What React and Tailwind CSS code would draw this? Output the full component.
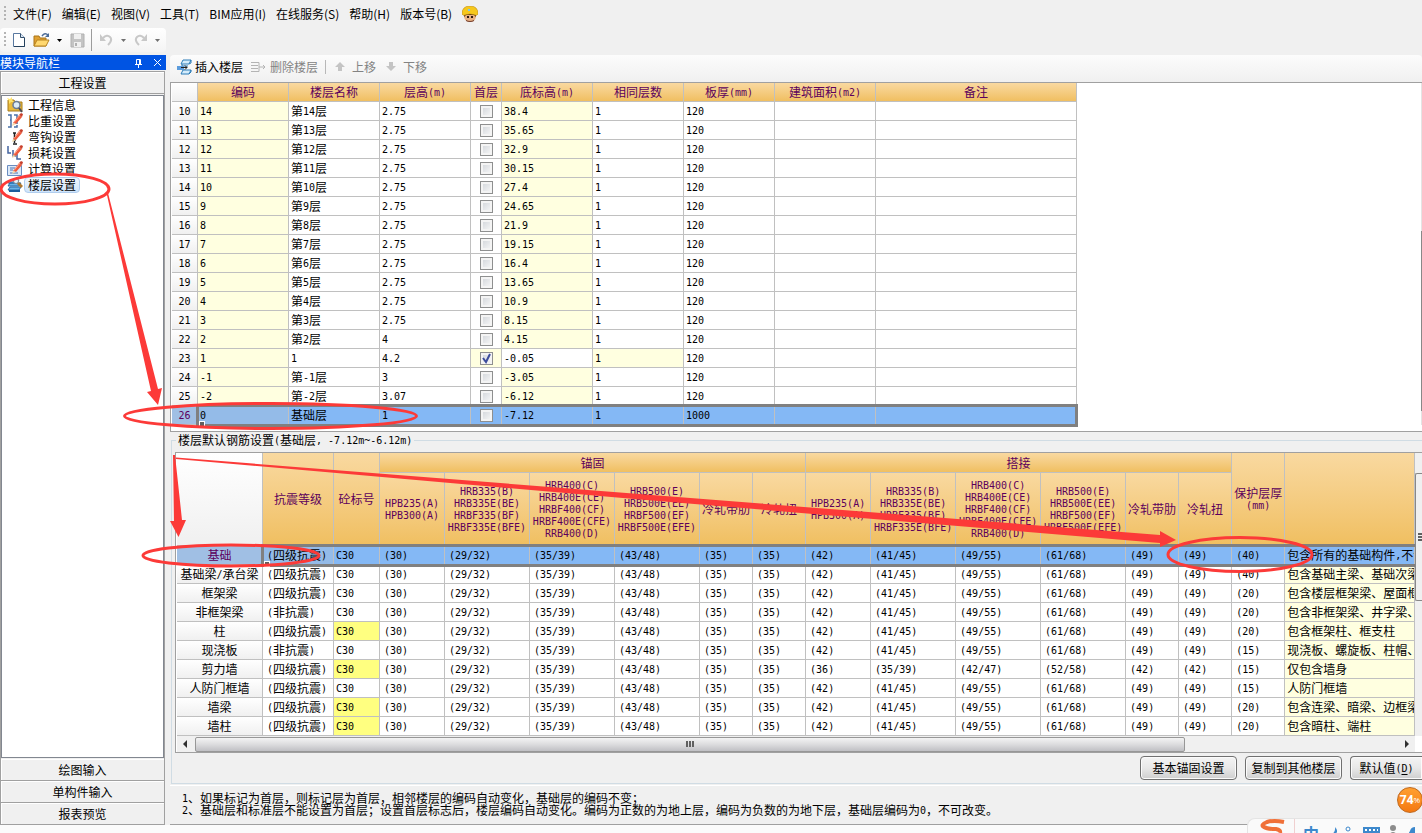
import { Fragment } from "react";
import clsx from "clsx";

const menus = [
  "文件(F)",
  "编辑(E)",
  "视图(V)",
  "工具(T)",
  "BIM应用(I)",
  "在线服务(S)",
  "帮助(H)",
  "版本号(B)",
];

const floorCols = [
  { label: "编码", width: "w-[91px]" },
  { label: "楼层名称", width: "w-[91px]" },
  { label: "层高(m)", width: "w-[91px]" },
  { label: "首层", width: "w-[31px]" },
  { label: "底标高(m)", width: "w-[91px]" },
  { label: "相同层数", width: "w-[91px]" },
  { label: "板厚(mm)", width: "w-[91px]" },
  { label: "建筑面积(m2)", width: "w-[101px]" },
  { label: "备注", width: "w-[201px]" },
];

// row no, code, name, height, bottom elevation, slab thickness
const floors = [
  [10, "14", "第14层", "2.75", "38.4", "120"],
  [11, "13", "第13层", "2.75", "35.65", "120"],
  [12, "12", "第12层", "2.75", "32.9", "120"],
  [13, "11", "第11层", "2.75", "30.15", "120"],
  [14, "10", "第10层", "2.75", "27.4", "120"],
  [15, "9", "第9层", "2.75", "24.65", "120"],
  [16, "8", "第8层", "2.75", "21.9", "120"],
  [17, "7", "第7层", "2.75", "19.15", "120"],
  [18, "6", "第6层", "2.75", "16.4", "120"],
  [19, "5", "第5层", "2.75", "13.65", "120"],
  [20, "4", "第4层", "2.75", "10.9", "120"],
  [21, "3", "第3层", "2.75", "8.15", "120"],
  [22, "2", "第2层", "4", "4.15", "120"],
  [23, "1", "1", "4.2", "-0.05", "120"],
  [24, "-1", "第-1层", "3", "-3.05", "120"],
  [25, "-2", "第-2层", "3.07", "-6.12", "120"],
  [26, "0", "基础层", "1", "-7.12", "1000"],
];

const steelCols = [
  { lines: ["HPB235(A)", "HPB300(A)"] },
  { lines: ["HRB335(B)", "HRB335E(BE)", "HRBF335(BF)", "HRBF335E(BFE)"] },
  { lines: ["HRB400(C)", "HRB400E(CE)", "HRBF400(CF)", "HRBF400E(CFE)", "RRB400(D)"] },
  { lines: ["HRB500(E)", "HRB500E(EE)", "HRBF500(EF)", "HRBF500E(EFE)"] },
  { lines: ["冷轧带肋"] },
  { lines: ["冷轧扭"] },
];

const anchor = ["(30)", "(29/32)", "(35/39)", "(43/48)", "(35)", "(35)"];
const lap = ["(42)", "(41/45)", "(49/55)", "(61/68)", "(49)", "(49)"];
const wallLap = ["(36)", "(35/39)", "(42/47)", "(52/58)", "(42)", "(42)"];

const members = [
  { name: "基础", grade: "(四级抗震)", lap, cover: "(40)", note: "包含所有的基础构件,不含", selected: true },
  { name: "基础梁/承台梁", grade: "(四级抗震)", lap, cover: "(40)", note: "包含基础主梁、基础次梁" },
  { name: "框架梁", grade: "(四级抗震)", lap, cover: "(20)", note: "包含楼层框架梁、屋面框" },
  { name: "非框架梁", grade: "(非抗震)", lap, cover: "(20)", note: "包含非框架梁、井字梁、" },
  { name: "柱", grade: "(四级抗震)", lap, cover: "(20)", note: "包含框架柱、框支柱", marked: true },
  { name: "现浇板", grade: "(非抗震)", lap, cover: "(15)", note: "现浇板、螺旋板、柱帽、" },
  { name: "剪力墙", grade: "(四级抗震)", lap: wallLap, cover: "(15)", note: "仅包含墙身", marked: true },
  { name: "人防门框墙", grade: "(四级抗震)", lap, cover: "(15)", note: "人防门框墙" },
  { name: "墙梁", grade: "(四级抗震)", lap, cover: "(20)", note: "包含连梁、暗梁、边框梁", marked: true },
  { name: "墙柱", grade: "(四级抗震)", lap, cover: "(20)", note: "包含暗柱、端柱", marked: true },
];

const CELL = "h-[19px] p-0 border-r border-b border-[#c0c0c0] whitespace-nowrap overflow-hidden";
const HEAD = "p-0 font-normal text-[#5c005c] border-r border-b border-[#c0c0c0] bg-linear-to-b from-[#f9d9a0] to-[#f0bf60]";
const ROW_HEAD = "bg-linear-to-b from-white to-[#f0f0f0] text-center font-normal";

// Latin runs are set half as wide as the Chinese characters
function Mixed({ children }) {
  return String(children)
    .split(/([\x20-\x7e]+)/)
    .map((part, i) =>
      i % 2 ? (
        <span key={i} className="align-[1px] font-['DejaVu_Sans_Mono',monospace] text-[10px] leading-none">
          {part}
        </span>
      ) : (
        <Fragment key={i}>{part}</Fragment>
      ),
    );
}

function Pencil() {
  return (
    <>
      <path d="M6 10 L12 2 L15 4 L9 11 Z" fill="#ee5a3c" />
      <path d="M12 2 L14 0 L16 1 L15 4 Z" fill="#c8402c" />
      <path d="M6 10 L9 11 L5 13 Z" fill="#f4d9a8" />
      <path d="M7 9.5 L13 2" stroke="#ffa48c" strokeWidth="1" />
    </>
  );
}

function NavIcon({ name }) {
  return (
    <svg width="16" height="16" viewBox="0 0 16 16" fill="none" className="shrink-0" aria-hidden="true">
      {name === "info" && (
        <>
          <path d="M1 3h6l1 2h7v9H1z" fill="#e9b93c" stroke="#a87c1c" />
          <path d="M0 1l3 1 2-2 0 3 2 2-3 0-2 2-0-3z" fill="#ffe36a" />
          <circle cx="9.5" cy="8" r="3.5" fill="#dcecf8" stroke="#6c7c94" strokeWidth="1.5" />
          <path d="M12 11l3 4" stroke="#4c4c58" strokeWidth="2" />
        </>
      )}
      {name === "weight" && (
        <>
          <path d="M1 2h3v12H1M7 2h3v9M7 14h3v-2M3 7h1M9 7h1" stroke="#4a72a8" strokeWidth="1.5" />
          <Pencil />
        </>
      )}
      {name === "hook" && (
        <>
          <path d="M6 4h3M7.500 4v10M6 15h4M6 11h3" stroke="#202020" strokeWidth="1.5" />
          <Pencil />
        </>
      )}
      {name === "loss" && (
        <>
          <path d="M1 1v7h3M6 5v6h3M10 9v5h4" stroke="#4464a0" strokeWidth="1.5" />
          <Pencil />
        </>
      )}
      {name === "calc" && (
        <>
          <path d="M.5 4.500h14v10H.5z" fill="#dce9f8" stroke="#6a8cc0" />
          <path d="M3 7h5M3 9h3M3 12h8" stroke="#4c74b4" />
          <Pencil />
        </>
      )}
      {name === "floor" && (
        <>
          <path d="M3 3h9l-2 3H1zM3 6h11l-2 3H1zM3 10h11l-2 3H1z" fill="#6ab4e8" stroke="#2468a8" />
          <path d="M2 14h11" stroke="#1c5c9c" strokeWidth="2" />
          <circle cx="9" cy="4" r="2.500" fill="#e8f4fc" stroke="#7c8894" />
          <path d="M11 6l4 4" stroke="#b07830" strokeWidth="3" />
        </>
      )}
    </svg>
  );
}

const navItems = [
  { label: "工程信息", icon: "info" },
  { label: "比重设置", icon: "weight" },
  { label: "弯钩设置", icon: "hook" },
  { label: "损耗设置", icon: "loss" },
  { label: "计算设置", icon: "calc" },
  { label: "楼层设置", icon: "floor", active: true },
];

function Grip() {
  return (
    <svg width="3" height="16" viewBox="0 0 3 16" fill="#b4b4b4" className="mx-1 shrink-0" aria-hidden="true">
      <path d="M0 0h2v2H0zM0 4h2v2H0zM0 8h2v2H0zM0 12h2v2H0z" />
    </svg>
  );
}

function Caret({ className }) {
  return (
    <svg width="5" height="3" viewBox="0 0 5 3" className={clsx("shrink-0", className)} aria-hidden="true">
      <path d="M0 0h5L2.500 3z" fill="currentColor" />
    </svg>
  );
}

function MenuBar() {
  return (
    <nav className="flex h-7 items-center" aria-label="菜单">
      <Grip />
      <div className="flex items-center gap-2.5 pl-0.5">
        {menus.map((m) => (
          <button key={m} className="text-xs whitespace-nowrap">
            {m}
          </button>
        ))}
      </div>
      <button aria-label="客服" className="ml-2.5">
        <svg width="16" height="16" viewBox="0 0 16 16">
          <path d="M2 7h12v4q-1 5-6 5t-6-5z" fill="#e8b080" />
          <path d="M2 8h12v3l-2-2H4l-2 2z" fill="#4c2c18" />
          <path d="M0 8Q0 0 8 0t8 8q-1 2-3 1-5-2-10 0-2 1-3-1z" fill="#f6c81c" stroke="#c08c10" strokeWidth=".6" />
          <path d="M6 3h2v2H6z" fill="#7cc8f0" />
          <path d="M5 10h2v2H5zM9 10h2v2H9z" fill="#2c1810" />
          <path d="M4 14q4 2 8 0v1q-4 2-8 0z" fill="#703c30" />
        </svg>
      </button>
    </nav>
  );
}

function ToolBar() {
  return (
    <div className="mb-[3px] flex h-6 w-[166px] items-center rounded-sm bg-linear-to-b from-white to-[#f4f4f4]">
      <Grip />
      <button aria-label="新建" className="ml-0.5">
        <svg width="12" height="16" viewBox="0 0 12 16">
          <path d="M.5 1.500h7l4 4v9H.5z" fill="#fff" stroke="#5878a0" />
          <path d="M7.500 1.500v4h4" fill="#dce8f4" stroke="#34506c" />
          <path d="M11.500 6v8.500H1" fill="none" stroke="#24405c" />
        </svg>
      </button>
      <button aria-label="打开" className="ml-2">
        <svg width="17" height="16" viewBox="0 0 17 16">
          <path d="M1 4h5l1 2h6v8H1z" fill="#e0a030" stroke="#a87418" />
          <path d="M4 8h12l-3 6H1z" fill="#ffd870" stroke="#b88420" />
          <path d="M9 4q3-4 6-1" fill="none" stroke="#4c6c98" strokeWidth="1.500" />
          <path d="M16 1v4h-4z" fill="#4c6c98" />
        </svg>
      </button>
      <Caret className="ml-[7px] text-black" />
      <button aria-label="保存" className="ml-2">
        <svg width="15" height="15" viewBox="0 0 15 15">
          <path d="M1 1h13v13H1z" fill="#c4c4c4" stroke="#b0b0b0" />
          <path d="M4 1h7v5H4zM4 9h7v5H4z" fill="#f0f0f0" />
          <path d="M5 10h2v3H5z" fill="#b0b0b0" />
        </svg>
      </button>
      <span className="mx-1.5 h-[22px] w-px bg-[#9c9c9c]" />
      <button aria-label="撤销" className="ml-0.5">
        <svg width="13" height="14" viewBox="0 0 13 14">
          <path d="M3 5q4-4 7-1t-2 8" fill="none" stroke="#c8c8c8" strokeWidth="2" />
          <path d="M0 1v7h6z" fill="#c8c8c8" />
        </svg>
      </button>
      <Caret className="ml-2 text-[#707070]" />
      <button aria-label="重做" className="ml-2">
        <svg width="13" height="14" viewBox="0 0 13 14">
          <path d="M10 5q-4-4-7-1t2 8" fill="none" stroke="#c8c8c8" strokeWidth="2" />
          <path d="M13 1v7H7z" fill="#c8c8c8" />
        </svg>
      </button>
      <Caret className="ml-2 text-[#707070]" />
    </div>
  );
}

function SectionButton({ children }) {
  return (
    <button className="h-[22px] w-full shrink-0 border-b border-[#a0a0a0] bg-[#f0f0f0] text-xs shadow-[inset_1px_1px_0_#fff]">
      {children}
    </button>
  );
}

function Sidebar() {
  return (
    <aside className="flex w-[166px] shrink-0 flex-col">
      <div className="flex h-[15px] items-center bg-[#0054e3] text-xs leading-[15px] text-white">
        <span className="flex-1">模块导航栏</span>
        <button aria-label="固定">
          <svg width="9" height="10" viewBox="0 0 9 10" fill="none" stroke="#fff">
            <path d="M2.500 6V1.500h4V6M5.500 2v4M1 6.500h7M4.500 7v3" />
          </svg>
        </button>
        <button aria-label="关闭" className="mr-1 ml-2.5">
          <svg width="9" height="9" viewBox="0 0 9 9" stroke="#fff">
            <path d="M1 1l7 7M8 1l-7 7" />
          </svg>
        </button>
      </div>
      <div className="mt-px mr-px flex flex-1 flex-col border-x border-t border-[#a0a0a0]">
        <SectionButton>工程设置</SectionButton>
        <ul className="my-px flex-1 border border-[#828790] bg-white pt-px pl-[5px]">
          {navItems.map(({ label, icon, active }) => (
            <li key={label}>
              <a href="#" className="flex h-4 items-center gap-px text-xs leading-4">
                <NavIcon name={icon} />
                <span
                  className={clsx(
                    "rounded-sm border px-[3px] leading-[14px]",
                    active ? "border-[#b0cdee] bg-linear-to-b from-[#f0f7fe] to-[#cfe4fb]" : "border-transparent",
                  )}
                >
                  {label}
                </span>
              </a>
            </li>
          ))}
        </ul>
        <SectionButton>绘图输入</SectionButton>
        <SectionButton>单构件输入</SectionButton>
        <SectionButton>报表预览</SectionButton>
      </div>
    </aside>
  );
}

function FloorToolbar() {
  return (
    <div className="flex h-[27px] items-center rounded-sm bg-linear-to-b from-[#fcfcfc] to-[#f0f0f0] pb-[3px] pl-1.5 text-xs text-[#838383]">
      <button className="flex items-center gap-[3px] text-black">
        <svg width="16" height="16" viewBox="0 0 16 16" fill="none">
          <path d="M7 1h8l-2 4H5zM7 11h8l-2 4H5z" fill="#d4ecfb" stroke="#2c7cb8" />
          <path d="M13 5l2-1V1M13 15l2-2v-2M6 5v2h6" stroke="#2c7cb8" />
          <path d="M1 7h7v4H1z" fill="#5c9cdc" />
          <path d="M5 8.500h6M9 6.500l2 2-2 2" stroke="#202020" />
        </svg>
        插入楼层
      </button>
      <button className="ml-[7px] flex items-center gap-1">
        <svg width="16" height="16" viewBox="0 0 16 16" fill="none" stroke="#b4b4b4">
          <path d="M1 3.500h8v9H1M1 6.500h7M1 9.500h7" />
          <path d="M9 8h6M13 6l2 2-2 2" />
        </svg>
        删除楼层
      </button>
      <span className="mx-[7px] h-3.5 w-px bg-[#b8b8b8]" />
      <button className="flex items-center gap-[5px]">
        <svg width="14" height="14" viewBox="0 0 14 14" fill="#c4c4c4">
          <path d="M7 2l5 5H9v4H5V7H2z" />
        </svg>
        上移
      </button>
      <button className="ml-2 flex items-center gap-[5px]">
        <svg width="14" height="14" viewBox="0 0 14 14" fill="#c4c4c4">
          <path d="M7 11L2 6h3V2h4v4h3z" />
        </svg>
        下移
      </button>
    </div>
  );
}

function FirstFloorBox({ label, checked }) {
  return (
    <label className="relative mx-auto block size-[13px]">
      <input
        type="checkbox"
        aria-label={label}
        defaultChecked={checked}
        className="peer block size-[13px] appearance-none border border-[#8e8f8f] bg-linear-to-br from-[#cfd3d8] to-[#fafafa] shadow-[inset_0_0_0_2px_#f4f4f4]"
      />
      <svg
        viewBox="0 0 13 13"
        className="pointer-events-none absolute inset-0 hidden peer-checked:block"
        fill="none"
        stroke="#3c4c9c"
        strokeWidth="2"
      >
        <path d="M3 6l3 4 4-8" />
      </svg>
    </label>
  );
}

function FloorTable() {
  return (
    <div className="flex border-t border-l border-b border-[#a0a0a0] bg-white pb-1.5 pl-px">
      <table className="w-[905px] table-fixed border-separate border-spacing-0 text-xs leading-[18px]">
        <thead>
          <tr>
            <th className="h-[19px] w-[26px] border-r border-b border-[#c0c0c0] bg-linear-to-b from-white to-[#f0f0f0] p-0" />
            {floorCols.map((c) => (
              <th key={c.label} className={clsx(HEAD, c.width)}>
                <Mixed>{c.label}</Mixed>
              </th>
            ))}
          </tr>
        </thead>
        <tbody>
          {floors.map(([no, code, name, height, bottom, slab]) => {
            const first = no === 23;
            const selected = no === 26;
            return (
              <tr key={no} className={clsx(selected && "relative bg-[#84b8f5]")}>
                <th className={clsx(CELL, selected ? "bg-[#a0bfe4] font-normal text-[#5c005c]" : ROW_HEAD)}>
                  <Mixed>{no}</Mixed>
                </th>
                <td className={clsx(CELL, "pl-0.5", selected ? "bg-[#94bbe8]" : "bg-[#ffffe0]")}>
                  <Mixed>{code}</Mixed>
                </td>
                <td className={clsx(CELL, "pl-0.5")}>
                  <Mixed>{name}</Mixed>
                </td>
                <td className={clsx(CELL, "pl-0.5")}>
                  <Mixed>{height}</Mixed>
                </td>
                <td className={clsx(CELL, first && "bg-[#ffffe0]")}>
                  <FirstFloorBox label={`首层 ${name}`} checked={first} />
                </td>
                <td className={clsx(CELL, "pl-0.5", !first && !selected && "bg-[#ffffe0]")}>
                  <Mixed>{bottom}</Mixed>
                </td>
                <td className={clsx(CELL, "pl-0.5", first && "bg-[#ffffe0]")}>
                  <Mixed>1</Mixed>
                </td>
                <td className={clsx(CELL, "pl-0.5")}>
                  <Mixed>{slab}</Mixed>
                </td>
                <td className={CELL} />
                <td className="h-[19px] border-r border-b border-[#c0c0c0] p-0">
                  {/* selection frame with its fill handle */}
                  {selected && (
                    <span className="pointer-events-none absolute -top-0.5 -right-px -bottom-0.5 left-6 border-3 border-[#808080]">
                      <span className="absolute -bottom-[3px] left-0 size-1.5 border border-white bg-[#606060]" />
                    </span>
                  )}
                </td>
              </tr>
            );
          })}
        </tbody>
      </table>
      <div className="ml-auto flex w-px flex-col bg-[#e4e4e4] pt-[148px]">
        <div className="h-[180px] bg-[#888]" />
      </div>
    </div>
  );
}

function SteelHead({ lines }) {
  return (
    <th className={clsx(HEAD, "h-[73px] leading-3 whitespace-nowrap")}>
      {lines.map((l) => (
        <div key={l} className="flex h-3 justify-center">
          <span>
            <Mixed>{l}</Mixed>
          </span>
        </div>
      ))}
    </th>
  );
}

function SteelTable() {
  return (
    <div className="overflow-hidden">
      <table className="w-full table-fixed border-separate border-spacing-0 text-xs leading-[18px]">
        <colgroup>
          <col className="w-[86px]" />
          <col className="w-[71px]" />
          <col className="w-[46px]" />
          <col className="w-[65px]" />
          <col className="w-[85px]" />
          <col className="w-[85px]" />
          <col className="w-[85px]" />
          <col className="w-[53px]" />
          <col className="w-[53px]" />
          <col className="w-[65px]" />
          <col className="w-[85px]" />
          <col className="w-[85px]" />
          <col className="w-[85px]" />
          <col className="w-[53px]" />
          <col className="w-[53px]" />
          <col className="w-[53px]" />
          <col />
        </colgroup>
        <thead>
          <tr>
            <th rowSpan={2} className="border-r border-b border-[#c0c0c0] bg-linear-to-b from-white to-[#f0f0f0] p-0" />
            <th rowSpan={2} className={HEAD}>抗震等级</th>
            <th rowSpan={2} className={HEAD}>砼标号</th>
            <th colSpan={6} className={clsx(HEAD, "h-5")}>锚固</th>
            <th colSpan={6} className={clsx(HEAD, "h-5")}>搭接</th>
            <th rowSpan={2} className={clsx(HEAD, "leading-3")}>
              保护层厚
              <br />
              <Mixed>(mm)</Mixed>
            </th>
            <th rowSpan={2} className={HEAD} />
          </tr>
          <tr>
            {steelCols.map((c) => (
              <SteelHead key={c.lines[0]} lines={c.lines} />
            ))}
            {steelCols.map((c) => (
              <SteelHead key={c.lines[0]} lines={c.lines} />
            ))}
          </tr>
        </thead>
        <tbody>
          {members.map((m) => (
            <tr key={m.name} className={clsx(m.selected && "relative bg-[#84b8f5]")}>
              <th className={clsx(CELL, m.selected ? "bg-[#a0bfe4] font-normal text-[#5c005c]" : ROW_HEAD)}>
                <Mixed>{m.name}</Mixed>
              </th>
              <td className={clsx(CELL, "pl-1", m.selected && "bg-[#94bbe8]")}>
                <Mixed>{m.grade}</Mixed>
              </td>
              <td className={clsx(CELL, "pl-0.5", m.marked && "bg-[#ffff80]")}>
                <Mixed>C30</Mixed>
              </td>
              {[...anchor, ...m.lap, m.cover].map((v, i) => (
                <td key={i} className={clsx(CELL, "pl-1")}>
                  <Mixed>{v}</Mixed>
                </td>
              ))}
              <td className={clsx(CELL, "pl-0.5", !m.selected && "bg-[#ffffe0]")}>
                <Mixed>{m.note}</Mixed>
                {m.selected && (
                  <span className="pointer-events-none absolute -top-0.5 right-0 -bottom-0.5 left-[84px] border-3 border-r-0 border-[#808080]">
                    <span className="absolute -bottom-[3px] left-0 size-1.5 border border-white bg-[#606060]" />
                  </span>
                )}
              </td>
            </tr>
          ))}
        </tbody>
      </table>
    </div>
  );
}

function HorizontalScroll() {
  return (
    <div className="flex h-4 items-center bg-[#f0f0f0]">
      <svg width="18" height="8" viewBox="0 0 18 8" aria-hidden="true">
        <path d="M10 0v8L6 4z" fill="#303030" />
      </svg>
      <div className="flex h-[15px] w-4/5 items-center justify-center gap-px rounded-xs border border-[#979797] bg-linear-to-b from-[#f4f4f4] via-[#dcdcde] to-[#c0c0c4]">
        <span className="h-1.5 w-0.5 bg-[#606060]" />
        <span className="h-1.5 w-0.5 bg-[#606060]" />
        <span className="h-1.5 w-0.5 bg-[#606060]" />
      </div>
      <svg width="18" height="8" viewBox="0 0 18 8" className="ml-auto" aria-hidden="true">
        <path d="M8 0v8l4-4z" fill="#303030" />
      </svg>
    </div>
  );
}

const BUTTON =
  "h-6 shrink-0 border border-[#707070] bg-linear-to-b from-[#f4f4f4] via-[#e8e8e8] to-[#cfcfcf] text-xs leading-none shadow-[inset_0_0_0_1px_#fbfbfb]";

function SteelSettings() {
  return (
    <fieldset className="ml-px min-w-0 border border-r-0 border-[#d0dce4] pt-1 pb-[3px]">
      <legend className="ml-1 px-0.5 text-xs leading-4">
        <Mixed>楼层默认钢筋设置(基础层, -7.12m~-6.12m)</Mixed>
      </legend>
      <div className="ml-[3px] flex border-y border-l border-[#a0a0a0] bg-white pl-px">
        <div className="min-w-0 flex-1">
          <SteelTable />
          <HorizontalScroll />
        </div>
        <div className="mb-4 flex w-[7px] flex-col bg-[#f0f0f0] pt-5">
          <div className="flex h-32 flex-col items-end justify-center gap-px rounded-l-xs border border-r-0 border-[#888] bg-[#f0f0f0]">
            <span className="h-0.5 w-1 bg-[#606060]" />
            <span className="h-0.5 w-1 bg-[#606060]" />
            <span className="h-0.5 w-1 bg-[#606060]" />
          </div>
        </div>
      </div>
      <div className="mt-[3px] flex justify-end gap-2">
        <button className={clsx(BUTTON, "w-[97px] rounded-sm")}>基本锚固设置</button>
        <button className={clsx(BUTTON, "w-[97px] rounded-sm")}>复制到其他楼层</button>
        <button className={clsx(BUTTON, "w-[72px] rounded-l-sm border-r-0")}>
          <Mixed>默认值(</Mixed>
          <u>
            <Mixed>D</Mixed>
          </u>
          <Mixed>)</Mixed>
        </button>
      </div>
    </fieldset>
  );
}

// Red marks that walk through the steps
function Annotations() {
  return (
    <svg width="1422" height="600" viewBox="0 0 1422 600" className="pointer-events-none absolute top-0 left-0" aria-hidden="true">
      <g fill="none" stroke="#fc3a38" strokeWidth="3">
        <ellipse cx="55" cy="189" rx="54" ry="15" />
        <ellipse cx="270.500" cy="416" rx="146" ry="12.500" />
        <ellipse cx="231" cy="555.500" rx="88" ry="10.500" />
        <ellipse cx="1240" cy="554.500" rx="72" ry="17" />
      </g>
      <g fill="#fc3a38">
        <path d="M106.500 193h1.500L158 389l4-1-4 17-11-13 4-1z" />
        <path d="M173 455h2l7 65h4l-7.500 17L170 521h4z" />
        <path d="M176 457.500L1160 535v-4l16 9-16 7v-4L640 499.500 176 459z" />
      </g>
    </svg>
  );
}

function InputMethodBar() {
  return (
    <div className="absolute right-0 bottom-0 flex h-[15px] w-[175px] items-start gap-2 overflow-hidden rounded-tl-lg border-t border-l border-[#e4e4e4] bg-[#fafafa] pl-2.5 text-[#3c88cc]">
      <svg width="28" height="14" viewBox="0 0 28 14" className="shrink-0" fill="none" aria-hidden="true">
        <path d="M26 3q-10-2-17 0-7 3-3 5 3 2 12 2 5 1 4 4" stroke="#f07038" strokeWidth="4" />
      </svg>
      <span className="h-4 w-px shrink-0 bg-[#f0d0d0]" />
      <span className="mt-1 text-base leading-5 font-bold">中</span>
      <svg width="88" height="13" viewBox="0 0 88 13" className="mt-1 shrink-0" fill="currentColor" aria-hidden="true">
        <path d="M8 4q5 5-2 9H3Q9 9 8 4z" />
        <circle cx="21" cy="6" r="2" fill="none" stroke="currentColor" />
        <path d="M36 4h17v9H36z" />
        <path d="M38 6h2v2h-2zM42 6h2v2h-2zM46 6h2v2h-2zM50 6h1v2h-1zM38 10h2v2h-2zM42 10h2v2h-2zM46 10h2v2h-2z" fill="#fff" />
        <circle cx="66" cy="5" r="3" fill="#8c8c8c" />
        <path d="M61 13q5-8 10 0z" fill="#8c8c8c" />
        <path d="M88 4q-4 0-5 4l-3 5h5l3-3z" />
      </svg>
    </div>
  );
}

export default function App() {
  return (
    <div className="relative flex min-h-screen flex-col overflow-hidden bg-[#f0f0f0] font-['Noto_Sans_CJK_SC',sans-serif] text-black">
      <MenuBar />
      <ToolBar />
      <main className="flex flex-1">
        <Sidebar />
        <section className="ml-1 flex min-w-0 flex-1 flex-col">
          <FloorToolbar />
          <FloorTable />
          <SteelSettings />
          <div className="mt-px flex-1 border-t border-b border-t-white border-b-[#a0a0a0] pt-1.5 pl-3 text-xs leading-3">
            <p className="h-3 whitespace-nowrap">
              <Mixed>1、如果标记为首层，则标记层为首层，相邻楼层的编码自动变化，基础层的编码不变；</Mixed>
            </p>
            <p className="h-3 whitespace-nowrap">
              <Mixed>
                2、基础层和标准层不能设置为首层；设置首层标志后，楼层编码自动变化。编码为正数的为地上层，编码为负数的为地下层，基础层编码为0，不可改变。
              </Mixed>
            </p>
          </div>
        </section>
      </main>
      <footer className="h-2 bg-[#fbfbfb]" />
      <Annotations />
      <div className="absolute -right-px bottom-5 flex size-[26px] items-center justify-center rounded-full border border-[#c0681c] bg-linear-to-b from-[#ffa030] to-[#f47810] font-['Open_Sans',sans-serif] text-xs font-bold text-white">
        74<span className="text-[8px] font-normal">%</span>
      </div>
      <InputMethodBar />
    </div>
  );
}
